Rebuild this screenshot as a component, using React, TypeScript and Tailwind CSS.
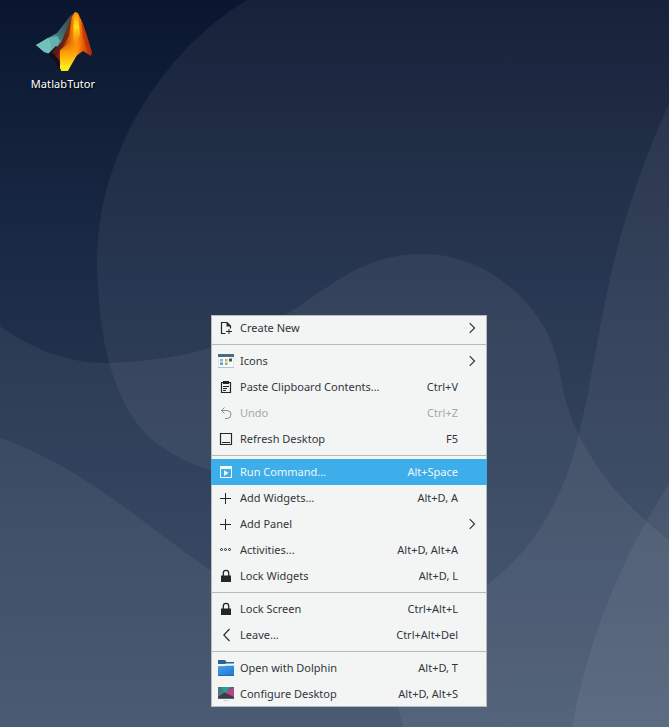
import React from "react";

type Kind =
  | "new" | "icons" | "paste" | "undo" | "desktop" | "run" | "plus"
  | "dots" | "lock" | "leave" | "folder" | "config";

type Item = {
  icon: Kind;
  label: string;
  keys?: string;
  sub?: boolean;
  disabled?: boolean;
  active?: boolean;
};

const groups: Item[][] = [
  [{ icon: "new", label: "Create New", sub: true }],
  [
    { icon: "icons", label: "Icons", sub: true },
    { icon: "paste", label: "Paste Clipboard Contents...", keys: "Ctrl+V" },
    { icon: "undo", label: "Undo", keys: "Ctrl+Z", disabled: true },
    { icon: "desktop", label: "Refresh Desktop", keys: "F5" },
  ],
  [
    { icon: "run", label: "Run Command...", keys: "Alt+Space", active: true },
    { icon: "plus", label: "Add Widgets...", keys: "Alt+D, A" },
    { icon: "plus", label: "Add Panel", sub: true },
    { icon: "dots", label: "Activities...", keys: "Alt+D, Alt+A" },
    { icon: "lock", label: "Lock Widgets", keys: "Alt+D, L" },
  ],
  [
    { icon: "lock", label: "Lock Screen", keys: "Ctrl+Alt+L" },
    { icon: "leave", label: "Leave...", keys: "Ctrl+Alt+Del" },
  ],
  [
    { icon: "folder", label: "Open with Dolphin", keys: "Alt+D, T" },
    { icon: "config", label: "Configure Desktop", keys: "Alt+D, Alt+S" },
  ],
];

// Every glyph is drawn on the same 16x16 grid.
const glyphs: Record<Kind, React.ReactNode> = {
  new: (
    <>
      <path d="M7.5 13.5h-4v-11H9L12.5 6v2.500" fill="none" stroke="currentColor" strokeWidth="1.200" />
      <path d="M8.500 2v4.500H13z" fill="currentColor" />
      <path d="M8 11h6v1H8zM10.500 9h1v5h-1z" fill="currentColor" />
    </>
  ),
  icons: (
    <>
      <path d="M0 1h16v13H0z" fill="#f8fbfb" />
      <path d="M0 1h16v3H0z" fill="#4d6b7c" />
      <path d="M0 14h16v.7H0z" fill="#a3abb0" />
      <path d="M0 4h.5v10H0zM15.500 4h.5v10h-.5z" fill="#cdd5d8" />
      <path d="M2 6h3v2.500H2z" fill="#8eb3da" />
      <path d="M7 6h2.500v2.500H7z" fill="#dfa06b" />
      <path d="M11 5.500h3v3h-3z" fill="#465762" />
      <path d="M2 9.500h3V12H2z" fill="#5e9fc9" />
      <path d="M7 9.500h2.500V12H7z" fill="#8cba60" />
    </>
  ),
  paste: (
    <>
      <path d="M3.500 3.500h9v10h-9z" fill="none" stroke="currentColor" strokeWidth="1.200" />
      <path d="M5 2h6v3H5zM5 7h6v1H5zM5 9h4v1H5zM5 11h3v1H5z" fill="currentColor" />
    </>
  ),
  undo: (
    <path d="M6.500 2.500l-3 3 3 3M3.500 5.500H9a4 4 0 0 1 0 8H7" fill="none" stroke="#8b8e90" />
  ),
  desktop: (
    <>
      <path d="M2.500 2.500h11v11h-11z" fill="none" stroke="currentColor" strokeWidth="1.200" />
      <path d="M4 11h8v1H4z" fill="currentColor" />
    </>
  ),
  run: (
    <>
      <path d="M2 2h12v12H2zM3 5v8h10V5z" fill="currentColor" fillRule="evenodd" />
      <path d="M6 6l4.500 3L6 12z" fill="currentColor" />
    </>
  ),
  plus: <path d="M7 3h1v5h5v1H8v5H7V9H2V8h5z" fill="currentColor" />,
  dots: (
    <g fill="none" stroke="currentColor">
      <circle cx="3.500" cy="7.500" r="1" />
      <circle cx="7.500" cy="7.500" r="1" />
      <circle cx="11.500" cy="7.500" r="1" />
    </g>
  ),
  lock: (
    <>
      <path d="M3 7.500h10V14H3z" fill="currentColor" />
      <path d="M5.300 8V5a2.700 2.700 0 0 1 5.400 0v3" fill="none" stroke="currentColor" strokeWidth="1.300" />
    </>
  ),
  leave: <path d="M11.500 2L5.800 8l5.700 6" fill="none" stroke="currentColor" strokeWidth="1.100" />,
  folder: (
    <>
      <path d="M0 0h7l1.500 2H16v5H0z" fill="#27658f" />
      <path d="M0 4h7l1-.5h8v3H0z" fill="#f0f6f8" />
      <path d="M0 6.500h6.500l1-.7H16V15H0z" fill="url(#folderFill)" />
      <path d="M0 15h16v1H0z" fill="#2168ad" />
    </>
  ),
  config: (
    <>
      <path d="M0 1h16v12H0z" fill="#55646d" />
      <path d="M1 1h12L7.500 6.500 2 9z" fill="#2b9c9c" />
      <path d="M0 1h3l3 5-6 5z" fill="#4d7780" />
      <path d="M16 1.500V11L6.500 6.500z" fill="#b9448a" />
      <path d="M0 11l6.500-4.500L16 11v1H0z" fill="#3a3d42" />
      <path d="M0 12h16v1H0z" fill="#5c6468" />
      <path d="M5.500 14h5v.8h-5z" fill="#c3c7c8" />
    </>
  ),
};

// Four translucent waves stacked over a vertical night-blue gradient.
function Wallpaper() {
  return (
    <svg className="absolute inset-0 h-full w-full" viewBox="0 0 669 727" preserveAspectRatio="none">
      <defs>
        <linearGradient id="sky" x1="0" y1="0" x2="0" y2="1">
          <stop offset="0" stopColor="#0a162f" />
          <stop offset=".4" stopColor="#1d2d48" />
          <stop offset="1" stopColor="#354864" />
        </linearGradient>
        <linearGradient id="folderFill" x1="0" y1="0" x2="1" y2="1">
          <stop offset="0" stopColor="#46a0e6" />
          <stop offset="1" stopColor="#2079d4" />
        </linearGradient>
      </defs>
      <path d="M0 0h669v727H0z" fill="url(#sky)" />
      <g fill="#fff" fillOpacity=".055">
        <path d="M247 0C160 52 88 165 98 285C101 365 125 415 150 438C168 453 190 464 212 471C310 500 375 590 398 707L403 727H669V0Z" />
        <path d="M0 326C35 351 70 363 107 363C180 361 235 345 285 315C330 288 360 254 423 254C490 254 552 310 560 374C569 440 615 500 669 540V727H0Z" />
        <path d="M0 438C80 465 145 525 210 570C310 640 400 640 487 585C530 553 563 503 578 437C600 355 602 250 669 104V727H0Z" />
        <path d="M669 484C620 560 588 640 572 727H669Z" />
      </g>
    </svg>
  );
}

function MatlabIcon() {
  return (
    <svg className="h-16 w-16" viewBox="0 0 64 64">
      <defs>
        <linearGradient id="ridge" x1="0" y1="1" x2="1" y2="0">
          <stop offset="0" stopColor="#5aa9a5" />
          <stop offset=".5" stopColor="#3a6a70" />
          <stop offset="1" stopColor="#4a3030" />
        </linearGradient>
        <linearGradient id="peak" x1="20" y1="0" x2="61" y2="0" gradientUnits="userSpaceOnUse">
          <stop offset="0" stopColor="#3c1414" />
          <stop offset=".25" stopColor="#8e2c0e" />
          <stop offset=".45" stopColor="#e0600a" />
          <stop offset=".6" stopColor="#ff9a08" />
          <stop offset=".75" stopColor="#f0680a" />
          <stop offset="1" stopColor="#a82408" />
        </linearGradient>
        <linearGradient id="foot" x1="0" y1="0" x2="0" y2="1">
          <stop offset="0" stopColor="#f07808" stopOpacity="0" />
          <stop offset=".5" stopColor="#ff9e08" />
          <stop offset="1" stopColor="#fff01c" />
        </linearGradient>
        <linearGradient id="streak" x1="0" y1="0" x2="0" y2="1">
          <stop offset="0" stopColor="#ff9a10" />
          <stop offset=".4" stopColor="#ffe21c" />
          <stop offset="1" stopColor="#ff9a08" stopOpacity="0" />
        </linearGradient>
      </defs>
      <path d="M17 31l9-5 7-9 6-8 5-4-3 14-9 15-8 8z" fill="url(#ridge)" />
      <path d="M5 38l12-7 9-2 3 5-3 7-6 6-6-2z" fill="#62b3ae" />
      <path d="M5 38l12-7 3 6-1 10-6-2z" fill="#72c0ba" />
      <path d="M17 47l8-8 7 6 1 17-4 1-5-8z" fill="#14101a" />
      <path d="M21 45l9-9 7-16 3-9 4-6 3 1 5 11 5 17 4 12-1 3-8-5-7 5-6 11-6 2-5-9z" fill="url(#peak)" />
      <path d="M21 45l9-9 7-17 4-10-3 20-8 14-5 6z" fill="#521a14" fillOpacity=".7" />
      <path d="M50 12l6 16 5 18-3 2-6-17z" fill="#bb300a" fillOpacity=".75" />
      <path d="M29 43l9-7 8-7 4 8-4 11-7 12-10 2z" fill="url(#foot)" />
      <path d="M43 8h4l2 19-3 11-4-6z" fill="url(#streak)" />
      <path d="M29 58l8 0 2 2-2 4h-7z" fill="#f5ee18" />
    </svg>
  );
}

function Row({ item }: { item: Item }) {
  const tone = item.active
    ? "bg-[#3daee9] text-[#eff8fc]"
    : item.disabled
      ? "text-[#a6a8a8]"
      : "text-[#31363b]";
  const ink = item.active ? "text-[#f2fafd]" : "text-[#232629]";
  return (
    <div className={`flex h-[26px] items-center pl-[7px] text-[11px] leading-[26px] ${tone}`}>
      <svg viewBox="0 0 16 16" className={`mr-[6px] h-4 w-4 shrink-0 ${ink}`}>{glyphs[item.icon]}</svg>
      <span className="grow whitespace-pre">{item.label}</span>
      <span className="whitespace-pre">{item.keys}</span>
      <span className="flex w-[29px] shrink-0 items-center pl-[11px]">
        {item.sub && (
          <svg viewBox="0 0 7 12" className="h-3 w-[7px]">
            <path d="M.7 1.200L5.500 6 .7 10.800" fill="none" stroke="currentColor" strokeWidth="1.200" />
          </svg>
        )}
      </span>
    </div>
  );
}

export default function App() {
  return (
    <main className="relative h-[727px] w-[669px] overflow-hidden font-['Noto_Sans',sans-serif]">
      <Wallpaper />
      <div className="absolute left-[23px] top-[7px] flex w-20 flex-col items-center">
        <MatlabIcon />
        <span className="mt-[5px] text-[11px] leading-4 tracking-[0.1px] text-white [text-shadow:1px_1px_2px_#000]">MatlabTutor</span>
      </div>
      <nav className="absolute left-[211px] top-[315px] h-[392px] w-[276px] bg-[#f3f5f5] shadow-[inset_0_0_0_1px_#b7babb]">
        {groups.map((group, i) => (
          <div key={i}>
            {i > 0 && (
              <div className="flex h-[7px] flex-col justify-center">
                <div className="h-px bg-[#b8bbbc]" />
              </div>
            )}
            {group.map((item) => <Row key={item.label} item={item} />)}
          </div>
        ))}
      </nav>
    </main>
  );
}
